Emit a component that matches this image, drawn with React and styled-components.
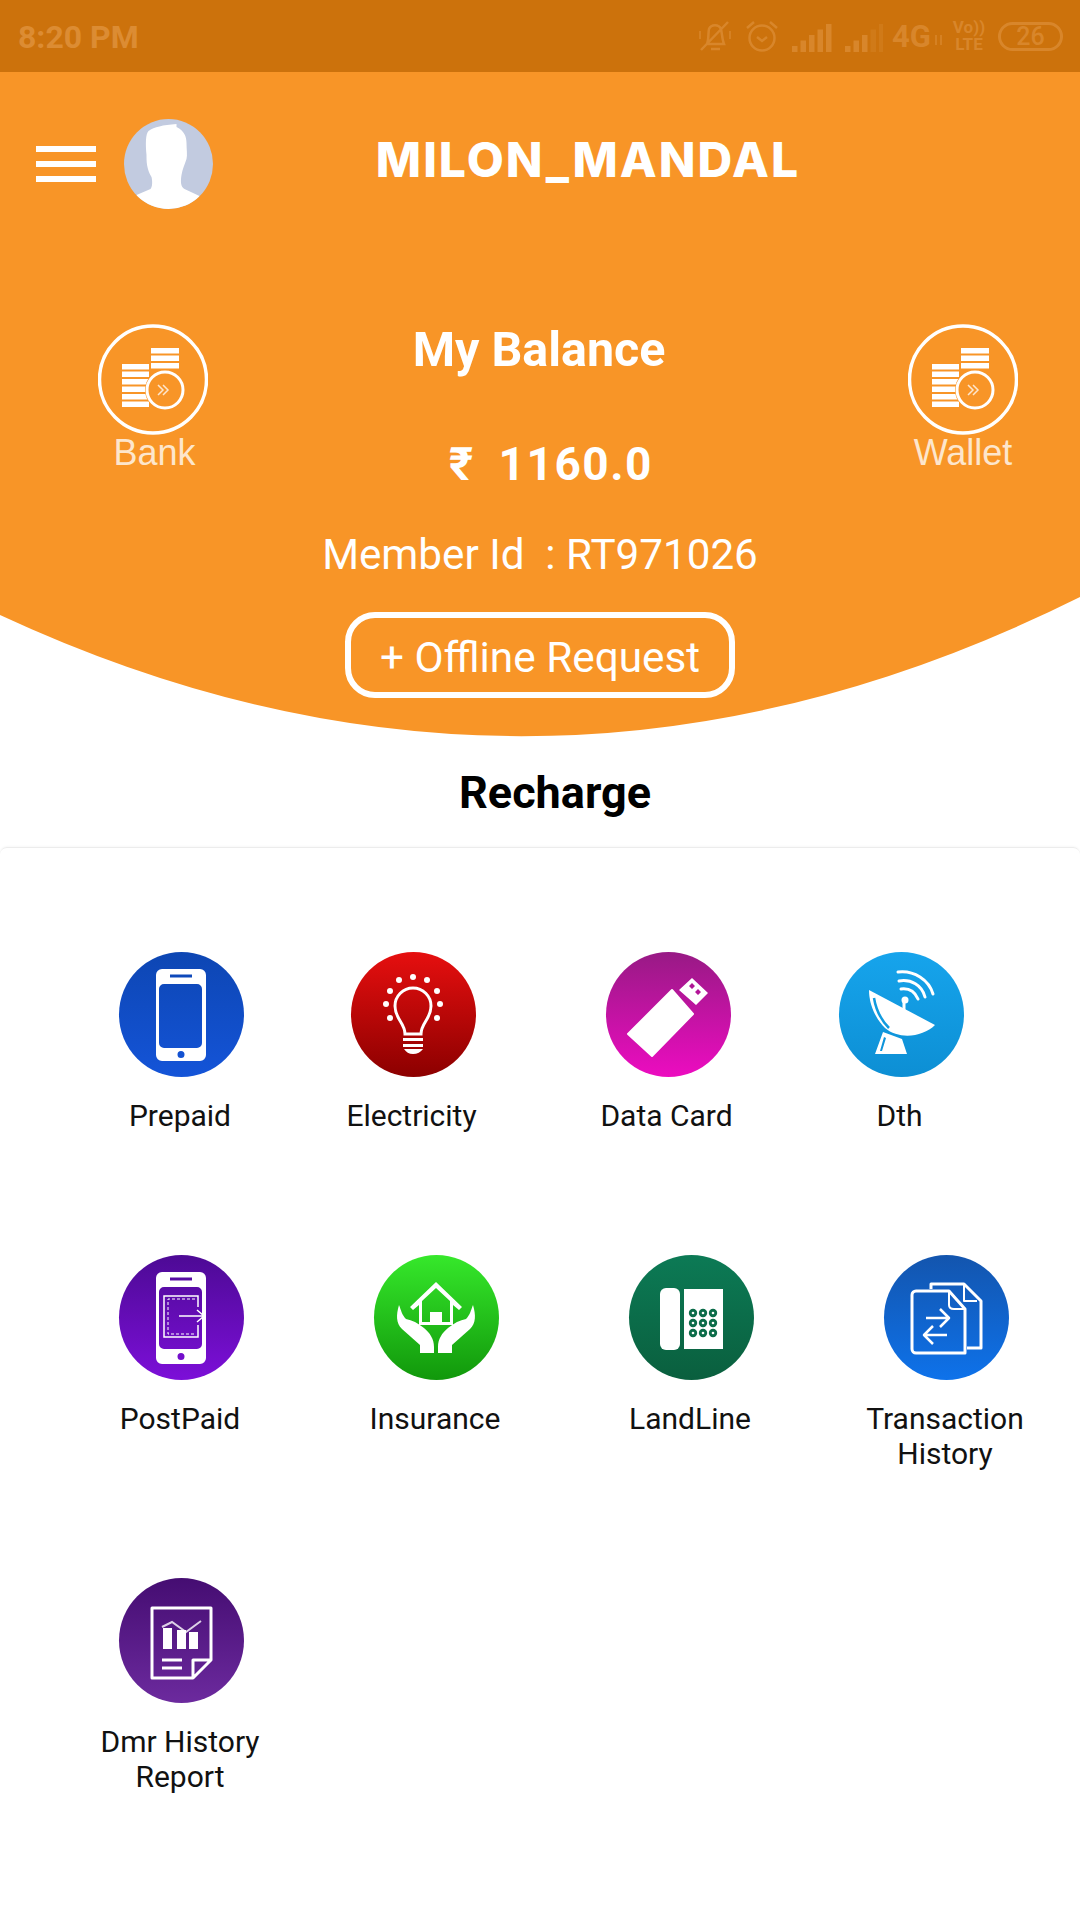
import React from "react";
import styled, { createGlobalStyle } from "styled-components";

const GlobalStyle = createGlobalStyle`
  html, body {
    margin: 0;
    padding: 0;
    background: #fff;
    font-family: Roboto, "Liberation Sans", sans-serif;
  }
`;

const Page = styled.div`
  width: 1080px;
  height: 1920px;
  background: #fff;
  overflow: hidden;
`;

const StatusBar = styled.div`
  height: 72px;
  background: #cc720c;
  color: #dc8c33;
  display: flex;
  align-items: center;
  justify-content: space-between;
  padding: 0 17px 0 18px;
`;

const Clock = styled.span`
  font-size: 32px;
  font-weight: 700;
  margin-top: 1px;
`;

const StatusIcons = styled.div`
  display: grid;
  grid-template-columns: 48px 47px 53px 47px 40px 20px 46px 65px;
  align-items: center;
  opacity: 0.8;
`;

const Net = styled.span`
  font-size: 31px;
  font-weight: 700;
  line-height: 1;
`;

const Volte = styled.span`
  display: block;
  font-size: 17px;
  font-weight: 700;
  line-height: 17px;
  text-align: center;
  width: 34px;
`;

const Battery = styled.span`
  display: block;
  width: 65px;
  height: 29px;
  box-sizing: border-box;
  border: 3px solid #dc8c33;
  border-radius: 15px;
  font-size: 25px;
  line-height: 23px;
  font-weight: 500;
  text-align: center;
`;

const Hero = styled.header`
  height: 665px;
  background: #f89527;
  color: #fff;
  display: flex;
  flex-direction: column;
  clip-path: path("M0 0 H1080 V525 Q540 794 0 543 Z");
`;

const TopBar = styled.div`
  height: 184px;
  display: flex;
  align-items: center;
  padding: 0 117px 0 36px;
`;

const Burger = styled.div`
  width: 60px;
  display: flex;
  flex-direction: column;
  gap: 9px;
  margin-right: 28px;

  span {
    display: block;
    height: 6px;
    background: #fff;
  }
`;

const Avatar = styled.div`
  width: 89px;
  height: 90px;
  border-radius: 50%;
  background: #c2cbe0;
  overflow: hidden;

  svg {
    display: block;
  }
`;

const UserName = styled.h1`
  flex: 1;
  margin: 0 0 8px;
  text-align: center;
  font-family: Inter, sans-serif;
  font-size: 48px;
  font-weight: 800;
  line-height: 56px;
  letter-spacing: 2px;
  white-space: nowrap;
`;

const BalanceArea = styled.div`
  display: grid;
  grid-template-columns: 320px 440px 320px;
`;

const Shortcut = styled.div`
  display: flex;
  flex-direction: column;
  align-items: center;
  width: 110px;
  padding-top: 68px;
  justify-self: ${(p) => (p.$right ? "end" : "start")};
  margin: ${(p) => (p.$right ? "0 62px 0 0" : "0 0 0 98px")};

  svg {
    display: block;
  }
`;

const ShortcutLabel = styled.span`
  font-family: "Liberation Sans", sans-serif;
  font-size: 36px;
  line-height: 36px;
  color: #fde6cc;
  white-space: nowrap;
  margin-left: ${(p) => (p.$right ? "0" : "3px")};
`;

const BalanceColumn = styled.div`
  display: flex;
  flex-direction: column;
  align-items: center;
  padding-top: 66px;
`;

const BalanceTitle = styled.div`
  font-size: 48.400px;
  font-weight: 700;
  line-height: 56px;
  margin-right: 2px;
`;

const Amount = styled.div`
  font-size: 46px;
  font-weight: 700;
  line-height: 56px;
  letter-spacing: 1.5px;
  margin-top: 58px;
  margin-left: 22px;
  word-spacing: -1px;
  white-space: pre;
`;

const MemberId = styled.div`
  font-size: 42.200px;
  line-height: 50px;
  margin-top: 38px;
  white-space: pre;
`;

const OfflineButton = styled.button`
  box-sizing: border-box;
  width: 390px;
  height: 86px;
  margin-top: 32px;
  background: transparent;
  border: 6px solid #fff;
  border-radius: 30px;
  color: #fff;
  font-family: Roboto, sans-serif;
  font-size: 42.300px;
  padding: 4px 0 0;
`;

const SectionTitle = styled.h2`
  height: 110px;
  margin: 0;
  padding: 1px 0 0 30px;
  box-sizing: border-box;
  display: flex;
  align-items: center;
  justify-content: center;
  font-size: 45px;
  font-weight: 700;
  color: #000;
`;

const Card = styled.section`
  border-top: 1px solid #ececec;
  border-radius: 7px 7px 0 0;
  box-shadow: 0 -1px 2px rgba(0, 0, 0, 0.03);
  padding: 104px 0 0 54px;
`;

const Row = styled.div`
  display: grid;
  grid-template-columns: ${(p) => p.$cols || "repeat(4, 255px)"};
  margin-bottom: ${(p) => p.$gap || 0}px;
`;

const Tile = styled.div`
  display: flex;
  flex-direction: column;
  align-items: center;
`;

const TileIcon = styled.div`
  width: 125px;
  height: 125px;
  border-radius: 50%;
  background: linear-gradient(${(p) => p.$from}, ${(p) => p.$to});
  overflow: hidden;

  svg {
    display: block;
  }
`;

const TileLabel = styled.div`
  margin: 21px 3px 0 0;
  font-size: 30px;
  line-height: 35px;
  color: #111;
  text-align: center;
  white-space: pre-line;
`;

const Glyph = ({ children }) => (
  <svg width="125" height="125" viewBox="0 0 125 125" fill="none">
    {children}
  </svg>
);

const PHONE_BODY =
  "M43 17H81A6 6 0 0 1 87 23V103A6 6 0 0 1 81 109H43A6 6 0 0 1 37 103V23A6 6 0 0 1 43 17Z";

const PrepaidIcon = () => (
  <Glyph>
    <path
      fill="#fff"
      fillRule="evenodd"
      d={`${PHONE_BODY}M45 32H78A5 5 0 0 1 83 37V91A5 5 0 0 1 78 96H45A5 5 0 0 1 40 91V37A5 5 0 0 1 45 32ZM51 22.500H73V25.500H51ZM62 99A3.500 3.500 0 1 0 62 106A3.500 3.500 0 1 0 62 99Z`}
    />
  </Glyph>
);

const BULB_DOTS = [
  [62, 25],
  [48, 28],
  [76, 28],
  [39, 39],
  [86, 39],
  [35, 52],
  [89, 52],
  [39, 66],
  [86, 66],
];

const ElectricityIcon = () => (
  <Glyph>
    {BULB_DOTS.map(([x, y]) => (
      <circle key={`${x}-${y}`} cx={x} cy={y} r="3" fill="#fff" />
    ))}
    <path
      stroke="#fff"
      strokeWidth="3"
      d="M54 82C54 71 44 67 44 54A18 18 0 0 1 80 54C80 67 70 71 70 82Z"
    />
    <path fill="#fff" d="M52 86H72V89H52ZM52 92H72V95H52ZM53 97H72C70 100 66 102 62 102C58 102 55 100 53 97Z" />
  </Glyph>
);

const DataCardIcon = () => (
  <Glyph>
    <path fill="#fff" d="M22 82L66 38L87 62L46 104Z" strokeLinejoin="round" stroke="#fff" strokeWidth="2" />
    <path
      fill="#fff"
      fillRule="evenodd"
      d="M73 38L86 26L102 41L90 53ZM86 31L83 34L86 37L89 34ZM92 37L89 40L92 43L95 40Z"
    />
  </Glyph>
);

const DthIcon = () => (
  <Glyph>
    <path fill="#fff" d="M30 38L96 73C84 85 60 88 46 76C36 66 30 52 30 38Z" />
    <path stroke="#119bdf" strokeWidth="2.500" d="M35 46C37 58 42 68 50 76" />
    <path stroke="#fff" strokeWidth="3" d="M65 50V60" />
    <circle cx="66" cy="48" r="3.500" fill="#fff" />
    <path
      stroke="#fff"
      strokeWidth="3"
      strokeLinecap="round"
      d="M59 20C75 18 90 28 94 42M60 29C72 27 83 33 86 45M62 37C70 36 76 40 79 47"
    />
    <path fill="#fff" fillRule="evenodd" d="M44 80L63 87L68 102H36ZM45 85L41 99H43L47 86Z" />
  </Glyph>
);

const PostpaidIcon = () => (
  <Glyph>
    <path
      fill="#fff"
      fillRule="evenodd"
      d={`${PHONE_BODY}M45 32H78A5 5 0 0 1 83 37V89A5 5 0 0 1 78 94H45A5 5 0 0 1 40 89V37A5 5 0 0 1 45 32ZM51 22.500H73V25.500H51ZM62 98A3.500 3.500 0 1 0 62 105A3.500 3.500 0 1 0 62 98Z`}
    />
    <path stroke="#fff" strokeWidth="1.500" d="M79 52V41H45V82H79V70" />
    <path stroke="#fff" strokeWidth="1" strokeDasharray="3 2" d="M76 44H49V79H76" />
    <path stroke="#fff" strokeWidth="1.500" d="M60 61H85M78 55L85 61L78 67" />
  </Glyph>
);

const InsuranceIcon = () => (
  <Glyph>
    <path
      fill="#fff"
      fillRule="evenodd"
      d="M62 27L88 52L85 55L79 50V70H45V50L39 55L36 52ZM62 33L48 46V67H56V57H68V67H76V46Z"
    />
    <path
      fill="#fff"
      d="M25 50C22 60 22 68 28 74L46 90V98H60V92C60 84 56 78 50 73C44 68 38 65 32 64C28 60 27 55 25 50Z"
    />
    <path
      fill="#fff"
      d="M99 50C102 60 102 68 96 74L78 90V98H64V92C64 84 68 78 74 73C80 68 86 65 92 64C96 60 97 55 99 50Z"
    />
  </Glyph>
);

const KEYS = [64, 74, 84].flatMap((x) => [58, 68, 78].map((y) => [x, y]));

const LandlineIcon = () => (
  <Glyph>
    <rect x="31" y="33" width="20" height="62" rx="6" fill="#fff" />
    <rect x="55" y="34" width="39" height="60" fill="#fff" />
    {KEYS.map(([x, y]) => (
      <g key={`${x}-${y}`}>
        <circle cx={x} cy={y} r="4.200" fill="#0c6c49" />
        <circle cx={x} cy={y} r="1.300" fill="#fff" />
      </g>
    ))}
  </Glyph>
);

const TransactionIcon = () => (
  <Glyph>
    <g stroke="#fff" strokeWidth="3" strokeLinejoin="round">
      <path d="M47 34V29H80L97 46V93H83" />
      <path d="M80 29V46H93" strokeWidth="2" />
      <path d="M32 36H65L81 54V98H32A4 4 0 0 1 28 94V40A4 4 0 0 1 32 36Z" />
      <path d="M65 36V50C65 53 67 54 70 54H81" strokeWidth="2" />
      <path strokeWidth="2.500" d="M42 63H65M56 54L65 63L56 72M63 80H40M49 71L40 80L49 89" />
    </g>
  </Glyph>
);

const ReportIcon = () => (
  <Glyph>
    <path
      stroke="#fff"
      strokeWidth="3"
      strokeLinejoin="round"
      d="M33 30H92V82L74 100H33ZM92 82H74V100"
    />
    <path fill="#fff" d="M44 50H53V71H44ZM58 52H67V71H58ZM70 54H79V71H70Z" />
    <path stroke="#fff" strokeOpacity="0.8" strokeWidth="2" d="M43 49L53 44L67 54L82 43" />
    <path stroke="#fff" strokeWidth="3" d="M43 82H63M43 90H63" />
  </Glyph>
);

const CoinsIcon = () => {
  const back = [24, 31.5, 39];
  const front = [40, 47.5, 55, 62.5, 70, 77.5];
  return (
    <svg width="110" height="111" viewBox="0 0 110 111" fill="none">
      <circle cx="55" cy="55.500" r="53.500" stroke="#fff" strokeWidth="3.500" />
      {back.map((y) => (
        <rect key={y} x="53" y={y} width="28" height="5.500" fill="#fff" />
      ))}
      {front.map((y) => (
        <rect key={y} x="24" y={y} width="27" height="5.500" fill="#fff" />
      ))}
      <circle cx="67" cy="66" r="20" fill="#f89527" />
      <circle cx="67" cy="66" r="18" stroke="#fff" strokeWidth="3" />
      <path stroke="#fde6cc" strokeWidth="1.500" d="M60 61L65 66L60 71M65 61L70 66L65 71" />
    </svg>
  );
};

const StatusGlyph = ({ w = 40, children }) => (
  <svg width={w} height="34" viewBox={`0 0 ${w} 34`} fill="none" stroke="#dc8c33" strokeWidth="2.500">
    {children}
  </svg>
);

const SignalIcon = ({ w, fade }) => (
  <StatusGlyph w={w}>
    {[0, 1, 2, 3, 4].map((i) => (
      <rect
        key={i}
        x={i * 8.500}
        y={27 - i * 5.500}
        width="5.500"
        height={6 + i * 5.500}
        fill="#dc8c33"
        stroke="none"
        opacity={fade && i > 2 ? 0.4 : 1}
      />
    ))}
  </StatusGlyph>
);

const TILE_ROWS = [
  {
    cols: "255px 208px 302px 164px",
    gap: 122,
    tiles: [
      { label: "Prepaid", from: "#0d46b3", to: "#1454d8", Icon: PrepaidIcon },
      { label: "Electricity", from: "#e60f0f", to: "#8c0000", Icon: ElectricityIcon },
      { label: "Data Card", from: "#981a85", to: "#ec0cc0", Icon: DataCardIcon },
      { label: "Dth", from: "#16a4ec", to: "#0d8fd4", Icon: DthIcon },
    ],
  },
  {
    gap: 107,
    tiles: [
      { label: "PostPaid", from: "#4d0a95", to: "#7c0fd8", Icon: PostpaidIcon },
      { label: "Insurance", from: "#36e82b", to: "#11980b", Icon: InsuranceIcon },
      { label: "LandLine", from: "#0c7a55", to: "#0a5f3e", Icon: LandlineIcon },
      { label: "Transaction\nHistory", from: "#1355ae", to: "#0e72ea", Icon: TransactionIcon },
    ],
  },
  {
    tiles: [
      { label: "Dmr History\nReport", from: "#450d72", to: "#6c2a9e", Icon: ReportIcon },
    ],
  },
];

export default function App() {
  return (
    <Page>
      <GlobalStyle />
      <StatusBar>
        <Clock>8:20 PM</Clock>
        <StatusIcons>
          <StatusGlyph w={36}>
            <path d="M10 25C12 20 11 14 12 10C14 5 22 5 24 10C25 14 25 20 27 25ZM14 30H23M4 31L31 3" />
            <path strokeWidth="1.500" d="M3 12V20M33 12V20" />
          </StatusGlyph>
          <StatusGlyph w={34}>
            <circle cx="17" cy="19" r="12.500" />
            <path d="M12 18L17 22L22 18M2 9L9 3M32 9L25 3" />
          </StatusGlyph>
          <SignalIcon w={40} />
          <SignalIcon w={38} fade />
          <Net>4G</Net>
          <StatusGlyph w={14}>
            <path strokeWidth="1.500" d="M4 26V16M9 16V26" />
          </StatusGlyph>
          <Volte>
            Vo))
            <br />
            LTE
          </Volte>
          <Battery>26</Battery>
        </StatusIcons>
      </StatusBar>

      <Hero>
        <TopBar>
          <Burger>
            <span />
            <span />
            <span />
          </Burger>
          <Avatar>
            <svg width="89" height="90" viewBox="0 0 88 90">
              <path
                fill="#fff"
                d="M12 76L26 70C28 68 28 62 27 58C22 50 22 42 22 36C21 25 21 15 24 12C30 8 38 6 52 5L52 8C60 12 62 18 62 24C62 30 63 36 62 40C60 46 58 50 57 56C56 62 56 68 60 70L75 77V90H12Z"
              />
            </svg>
          </Avatar>
          <UserName>MILON_MANDAL</UserName>
        </TopBar>

        <BalanceArea>
          <Shortcut>
            <CoinsIcon />
            <ShortcutLabel>Bank</ShortcutLabel>
          </Shortcut>
          <BalanceColumn>
            <BalanceTitle>My Balance</BalanceTitle>
            <Amount>₹  1160.0</Amount>
            <MemberId>Member Id  : RT971026</MemberId>
            <OfflineButton>+ Offline Request</OfflineButton>
          </BalanceColumn>
          <Shortcut $right>
            <CoinsIcon />
            <ShortcutLabel $right>Wallet</ShortcutLabel>
          </Shortcut>
        </BalanceArea>
      </Hero>

      <SectionTitle>Recharge</SectionTitle>

      <Card>
        {TILE_ROWS.map((row) => (
          <Row key={row.tiles[0].label} $cols={row.cols} $gap={row.gap}>
            {row.tiles.map(({ label, from, to, Icon }) => (
              <Tile key={label}>
                <TileIcon $from={from} $to={to}>
                  <Icon />
                </TileIcon>
                <TileLabel>{label}</TileLabel>
              </Tile>
            ))}
          </Row>
        ))}
      </Card>
    </Page>
  );
}
